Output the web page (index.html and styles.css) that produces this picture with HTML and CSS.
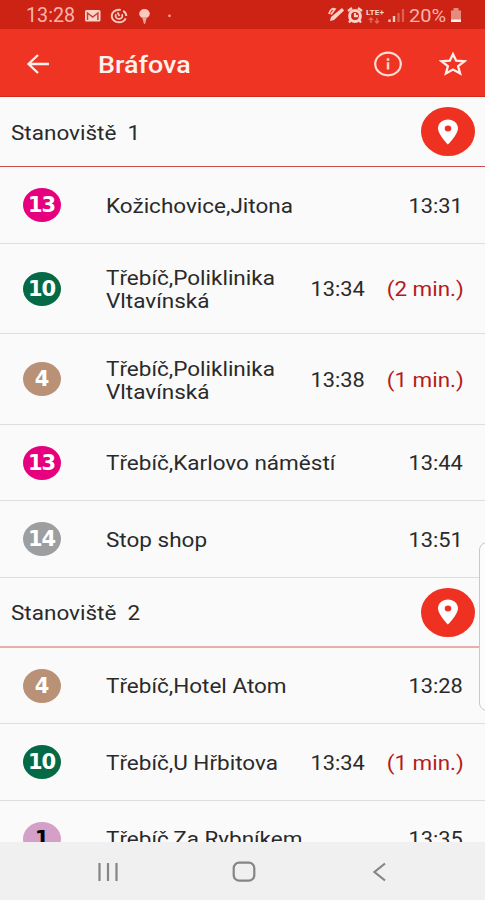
FILE: index.html
```html
<!DOCTYPE html>
<html lang="cs">
<head>
<meta charset="utf-8">
<title>Bráfova</title>
<link rel="stylesheet" href="styles.css">
</head>
<body>
<div class="screen">
  <div class="status">
    <span class="wide clock">13:28</span>
    <svg class="status-left" width="90" height="20" viewBox="0 0 90 20">
      <rect x="1" y="4" width="15.500" height="11.500" rx="1.500" fill="#fbd2c8"/>
      <path d="M3.500 14V7l5.200 4 5.200-4v7" fill="none" stroke="#c94132" stroke-width="1.500"/>
      <ellipse cx="35" cy="10" rx="7.300" ry="6.300" fill="none" stroke="#fbc9be" stroke-width="1.900" stroke-dasharray="31 2.500" stroke-dashoffset="-36"/>
      <path d="M32.200 8.300a3.400 2.900 0 1 0 5.600 0M33.500 6.500l2 3.500" fill="none" stroke="#fbc9be" stroke-width="1.700"/>
      <ellipse cx="60.500" cy="7.800" rx="5.300" ry="4.700" fill="#fbc9be"/>
      <path d="M58 11h5l-2 7h-1z" fill="#eba195"/>
      <circle cx="85.500" cy="9.800" r="1.400" fill="#f3a08f"/>
    </svg>
    <span class="spacer"></span>
    <svg class="status-right" width="82" height="22" viewBox="0 0 82 22">
      <path d="M3 16l1-4L15 3l2 2.500L7 15z" fill="#fbd2c8"/>
      <path d="M2 9c1-4 3-6 6-5L4 9.500" fill="none" stroke="#fbc9be" stroke-width="1.800"/>
      <circle cx="28" cy="11" r="5.400" fill="none" stroke="#fbd2c8" stroke-width="3"/>
      <path d="M21 6l4-3M35 6l-4-3M24 15l-2 2.500M32 15l2 2.500M28 8v3.200h3" fill="none" stroke="#fbd2c8" stroke-width="2.200"/>
      <text x="39" y="9.500" class="lte" textLength="18" lengthAdjust="spacingAndGlyphs">LTE+</text>
      <path d="M44 18v-5m-2 2l2-2 2 2M50 13v5m-2-2l2 2 2-2" stroke="#df6c60" stroke-width="1.400" fill="none"/>
      <path d="M62.500 17v-2.500M67 17v-6" stroke="#fbc9be" stroke-width="2.400"/>
      <path d="M71.500 17V8M76 17V4" stroke="#db6155" stroke-width="2.200"/>
    </svg>
    <span class="wide battery-text">20%</span>
    <svg class="battery" width="12" height="17" viewBox="0 0 12 17">
      <path d="M1 3.500h2.500V1h5v2.500H11V15H1z" fill="#e58a7f"/>
      <path d="M1 12.500h10V15H1z" fill="#fff0ec"/>
    </svg>
  </div>
  <header class="bar">
    <svg class="back" width="24" height="22" viewBox="0 0 24 22"><path d="M23 11H3M12 2L2.500 11l9.500 9" fill="none" stroke="#fff2ee" stroke-width="2.300"/></svg>
    <h1 class="title"><span class="wide">Bráfova</span></h1>
    <svg class="info" width="30" height="28" viewBox="0 0 30 28"><ellipse cx="15" cy="14" rx="12.800" ry="11.300" fill="none" stroke="#ffdcd4" stroke-width="2.200"/><path d="M15 12.300v7.200M15 8.200v2.500" stroke="#ffd2c8" stroke-width="2.500"/></svg>
    <svg class="star" width="28" height="26" viewBox="0 0 28 26"><path d="M14 3.200l3.200 6.500 8.100.6-6.200 4.900 2 7.300-7.100-3.900-7.100 3.900 2-7.300-6.200-4.900 8.100-.6z" fill="none" stroke="#fff0ec" stroke-width="2.300"/></svg>
  </header>
  <main class="list">
    <section class="stop">
      <span class="wide label">Stanoviště&nbsp; 1</span>
      <span class="pin"><svg width="20" height="26" viewBox="0 0 20 26"><path fill-rule="evenodd" d="M10 .5C4.500.5 0 4.300 0 9.200 0 15.500 10 25.500 10 25.500s10-10 10-16.300C20 4.300 15.500.5 10 .5zm0 5.900a3.300 3 0 1 1 0 6 3.300 3 0 0 1 0-6z" fill="#fff"/></svg></span>
    </section>
    <div class="row h77"><span class="badge magenta">13</span><span class="dest wide">Kožichovice,Jitona</span><span class="time wide">13:31</span></div>
    <div class="row h90"><span class="badge green">10</span><span class="dest wide">Třebíč,Poliklinika<br>Vltavínská</span><span class="time wide">13:34</span><span class="delay wide">(2 min.)</span></div>
    <div class="row h91"><span class="badge brown">4</span><span class="dest wide">Třebíč,Poliklinika<br>Vltavínská</span><span class="time wide">13:38</span><span class="delay wide">(1 min.)</span></div>
    <div class="row h76"><span class="badge magenta">13</span><span class="dest wide">Třebíč,Karlovo náměstí</span><span class="time wide">13:44</span></div>
    <div class="row h77"><span class="badge gray">14</span><span class="dest wide">Stop shop</span><span class="time wide">13:51</span></div>
    <section class="stop second">
      <span class="wide label">Stanoviště&nbsp; 2</span>
      <span class="pin"><svg width="20" height="26" viewBox="0 0 20 26"><path fill-rule="evenodd" d="M10 .5C4.500.5 0 4.300 0 9.200 0 15.500 10 25.500 10 25.500s10-10 10-16.300C20 4.300 15.500.5 10 .5zm0 5.900a3.300 3 0 1 1 0 6 3.300 3 0 0 1 0-6z" fill="#fff"/></svg></span>
    </section>
    <div class="row h76"><span class="badge brown">4</span><span class="dest wide">Třebíč,Hotel Atom</span><span class="time wide">13:28</span></div>
    <div class="row h77"><span class="badge green">10</span><span class="dest wide">Třebíč,U Hřbitova</span><span class="time wide">13:34</span><span class="delay wide">(1 min.)</span></div>
    <div class="row h76"><span class="badge pink">1</span><span class="dest wide">Třebíč,Za Rybníkem</span><span class="time wide">13:35</span></div>
  </main>
  <nav class="nav">
    <svg width="24" height="22" viewBox="0 0 24 22"><path d="M3.500 2v18M12 2v18M20.500 2v18" stroke="#858585" stroke-width="2.200"/></svg>
    <svg width="24" height="22" viewBox="0 0 24 22"><rect x="1.700" y="1.700" width="20.600" height="18" rx="5.500" fill="none" stroke="#858585" stroke-width="2.200"/></svg>
    <svg width="24" height="22" viewBox="0 0 24 22"><path d="M17 2.500L6.500 11 17 19.500" fill="none" stroke="#858585" stroke-width="2.200"/></svg>
  </nav>
  <div class="edge-handle"></div>
</div>
</body>
</html>
```
FILE: styles.css
```css
* { box-sizing: border-box; }
body { margin: 0; background: #fafafa; font-family: Roboto, "Liberation Sans", sans-serif; }
.screen { position: relative; display: flex; flex-direction: column; width: 485px; height: 900px; overflow: hidden; color: #2a2a2a; font-size: 20px; line-height: 23px; }
.wide { display: inline-block; white-space: nowrap; transform: scaleX(1.12); transform-origin: left center; }
svg { display: block; flex: none; }

.status { display: flex; align-items: center; height: 29px; padding: 2px 23px 0 26px; background: #cd2315; color: #f8b5aa; flex: none; }
.clock { width: 58px; font-size: 19.5px; transform: scaleX(1.01); }
.spacer { flex: 1; }
.lte { font: bold 8px Roboto, sans-serif; fill: #fbd2c8; }
.battery-text { width: 41px; margin-left: 0; font-size: 19px; transform: scaleX(1.05); }

.bar { display: flex; align-items: center; height: 68px; padding: 2px 18px 0 26px; background: #f03423; border-bottom: 1px solid #cf2a1c; color: #fff2ee; flex: none; }
.title { flex: 1; margin: 2px 0 0 48px; font-size: 24px; line-height: 28px; font-weight: 500; }
.star { margin-left: 36px; }

.list { flex: 1; min-height: 0; overflow: hidden; }
.stop { display: flex; align-items: center; justify-content: space-between; height: 70px; padding: 0 10px 0 11px; border-bottom: 1px solid #c94f48; }
.stop.second { border-bottom: 2px solid #e6b1aa; }
.label { padding-top: 3px; transform: scaleX(1.125); }
.pin { display: flex; align-items: center; justify-content: center; width: 54px; height: 49px; border-radius: 50%; background: #ee3120; }

.row { display: flex; align-items: center; padding: 0 22px 0 23px; border-bottom: 1px solid #dedede; }
.h76 { height: 76px; }
.h77 { height: 77px; }
.h90 { height: 90px; }
.h91 { height: 91px; }
.badge { display: flex; align-items: center; justify-content: center; width: 38px; height: 34px; border-radius: 50%; color: #fff; font: bold 21px "DejaVu Sans", sans-serif; letter-spacing: -1.2px; text-indent: -1px; }
.magenta { background: #e6007e; }
.green { background: #046a45; }
.brown { background: #b99176; }
.gray { background: #9c9e9f; }
.pink { background: #d4a0c8; color: #000; }
.dest { flex: 1; margin-left: 45px; padding-top: 2px; transform: scaleX(1.125); }
.time { padding-top: 2px; transform: scaleX(1.09); transform-origin: right center; }
.h90 .dest, .h91 .dest { padding-top: 3px; }
.delay { margin: 0 -1px 0 30px; padding-top: 2px; color: #b51a1a; transform-origin: right center; }

.nav { display: flex; align-items: center; justify-content: space-between; height: 58px; padding: 1px 93px 0 96px; background: #f0f0f0; flex: none; }
.edge-handle { position: absolute; left: 479px; top: 542px; width: 20px; height: 169px; border: 1px solid #c8c8c8; border-radius: 8px; background: #fcfcfc; }
```
